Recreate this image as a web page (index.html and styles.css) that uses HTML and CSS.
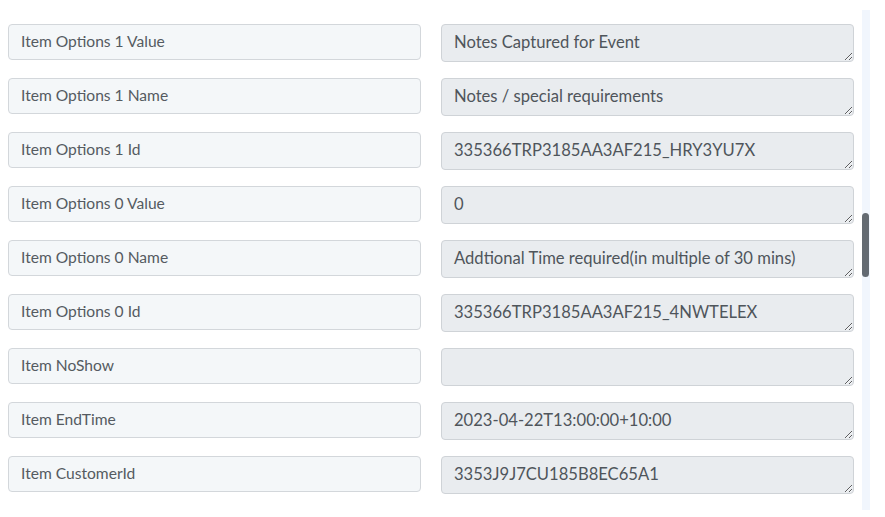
FILE: index.html
```html
<!DOCTYPE html>
<html>
<head>
<meta charset="utf-8">
<link rel="stylesheet" href="styles.css">
</head>
<body>
<div class="page">
  <div class="rows">
    <div class="row"><div class="key">Item Options 1 Value</div><textarea class="val" readonly>Notes Captured for Event</textarea></div>
    <div class="row"><div class="key">Item Options 1 Name</div><textarea class="val" readonly>Notes / special requirements</textarea></div>
    <div class="row"><div class="key">Item Options 1 Id</div><textarea class="val" readonly>335366TRP3185AA3AF215_HRY3YU7X</textarea></div>
    <div class="row"><div class="key">Item Options 0 Value</div><textarea class="val" readonly>0</textarea></div>
    <div class="row"><div class="key">Item Options 0 Name</div><textarea class="val" readonly>Addtional Time required(in multiple of 30 mins)</textarea></div>
    <div class="row"><div class="key">Item Options 0 Id</div><textarea class="val" readonly>335366TRP3185AA3AF215_4NWTELEX</textarea></div>
    <div class="row"><div class="key">Item NoShow</div><textarea class="val" readonly></textarea></div>
    <div class="row"><div class="key">Item EndTime</div><textarea class="val" readonly>2023-04-22T13:00:00+10:00</textarea></div>
    <div class="row"><div class="key">Item CustomerId</div><textarea class="val" readonly>3353J9J7CU185B8EC65A1</textarea></div>
  </div>
  <div class="scrolltrack"><div class="scrollthumb"></div></div>
</div>
</body>
</html>
```
FILE: styles.css
```css
html, body {
  margin: 0;
  padding: 0;
  background: #ffffff;
  overflow: hidden;
}
.page {
  position: relative;
  width: 885px;
  height: 517px;
  font-family: Lato, "Open Sans", sans-serif;
}
.rows {
  display: flex;
  flex-direction: column;
  gap: 16px;
  padding: 24px 0 0 8px;
}
.row {
  display: flex;
  gap: 20px;
  align-items: flex-start;
}
.key {
  box-sizing: border-box;
  width: 413px;
  height: 36px;
  border: 1px solid #d3d7db;
  border-radius: 4px;
  background: #f4f7f9;
  color: #555b61;
  font-size: 15.6px;
  line-height: 33px;
  padding: 0 12px;
}
.val {
  box-sizing: border-box;
  display: block;
  width: 413px;
  height: 38px;
  margin: 0;
  border: 1px solid #cfd3d7;
  border-radius: 4px;
  background: #e9ecef;
  color: #4f555b;
  font-family: Lato, "Open Sans", sans-serif;
  font-size: 16.6px;
  line-height: 20px;
  padding: 7px 12px;
  resize: vertical;
  overflow: hidden;
  outline: none;
}
.scrolltrack {
  position: absolute;
  left: 862px;
  top: 10px;
  width: 8px;
  height: 500px;
  background: #f1f6fd;
}
.scrollthumb {
  position: absolute;
  left: 0;
  top: 203px;
  width: 7px;
  height: 64px;
  border-radius: 4px;
  background: #636a72;
}
```
